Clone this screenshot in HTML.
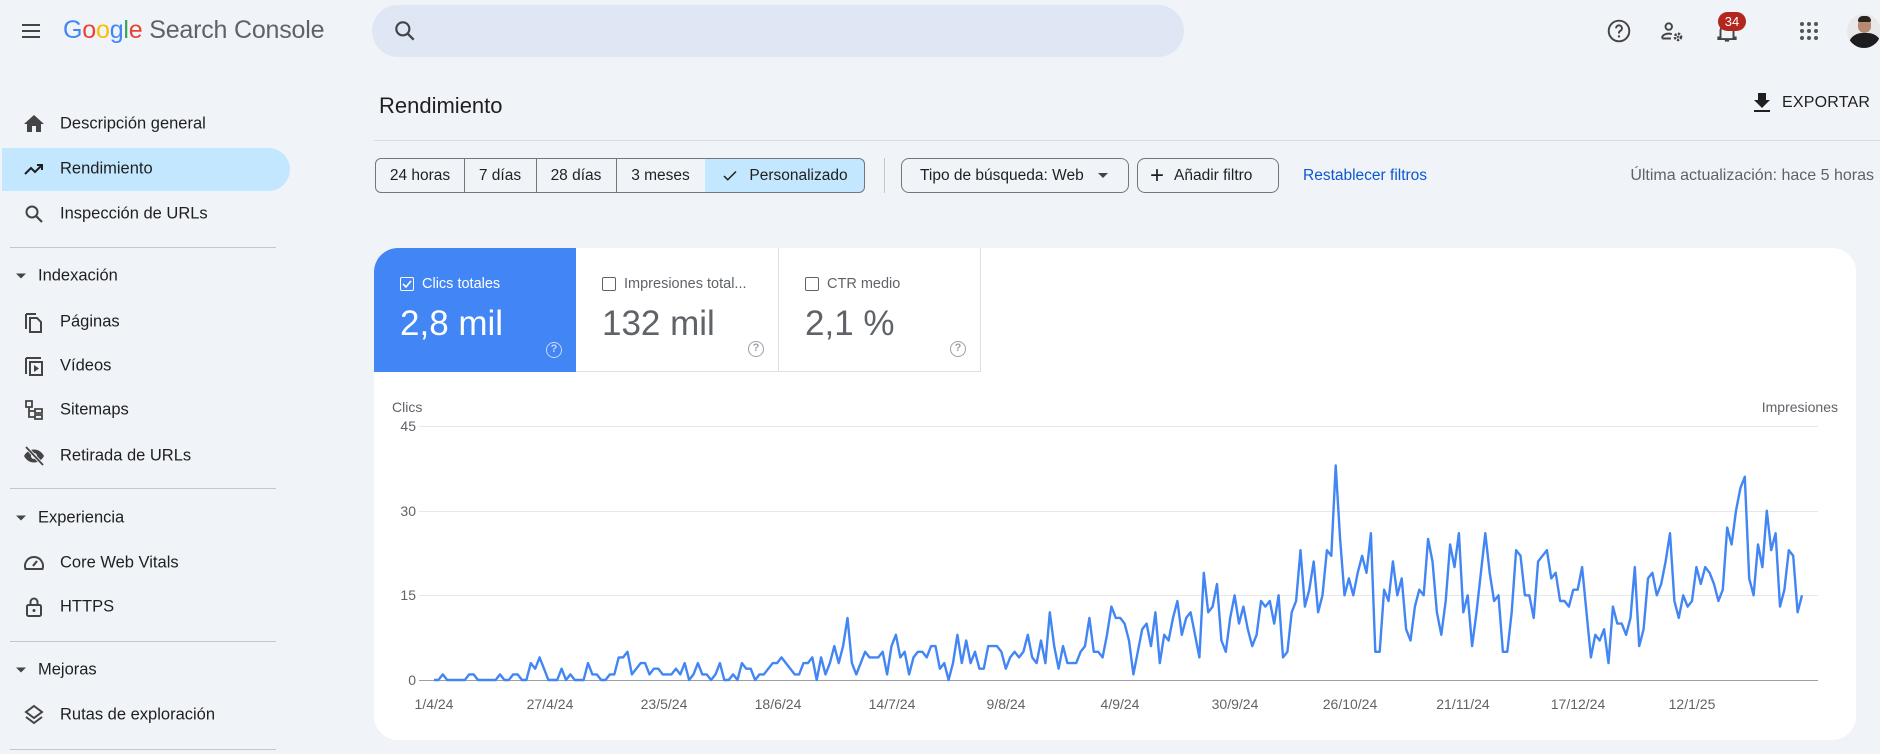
<!DOCTYPE html>
<html><head><meta charset="utf-8">
<style>
*{margin:0;padding:0;box-sizing:border-box}
body{width:1880px;height:754px;overflow:hidden;background:#f0f4f9;font-family:"Liberation Sans",Arial,sans-serif;color:#1f1f1f;position:relative}
.a{position:absolute}
.nav{position:absolute;left:60px;font-size:16.5px;color:#1f1f1f;transform:translateY(-50%)}
.ic{position:absolute;left:22px;width:24px;height:24px;transform:translateY(-50%)}
.sec{position:absolute;left:38px;font-size:16.5px;color:#1f1f1f;transform:translateY(-50%)}
.tri{position:absolute;left:16px;width:0;height:0;border-left:5px solid transparent;border-right:5px solid transparent;border-top:5px solid #444;transform:translateY(-50%)}
.div{position:absolute;left:10px;width:266px;height:1px;background:#c7c7c7}
.chip{position:absolute;top:158px;height:35px;border:1px solid #747775;font-size:15.5px;color:#1f1f1f;display:flex;align-items:center;justify-content:center}
.btn{position:absolute;top:158px;height:35px;border:1px solid #747775;border-radius:8px;font-size:15.5px;color:#1f1f1f;display:flex;align-items:center}
.tile{position:absolute;top:248px;height:124px;border-right:1px solid #e0e0e0;border-bottom:1px solid #e0e0e0}
.tl{position:absolute;left:26px;top:28px;font-size:14.5px;display:flex;align-items:center;gap:8px;white-space:nowrap}
.cb{width:14px;height:14px;border:1.6px solid #5f6368;border-radius:2px}
.tv{position:absolute;left:26px;top:56px;font-size:35px}
.q{position:absolute;right:14px;bottom:14px;width:16px;height:16px;border:1.5px solid #9aa0a6;border-radius:50%;font-size:11px;color:#9aa0a6;text-align:center;line-height:13px;font-weight:bold}
.yl{position:absolute;left:380px;width:36px;text-align:right;font-size:14px;color:#5f6368;transform:translateY(-50%)}
.gl{position:absolute;left:419px;width:1399px;height:1px;background:#e8e8e8}
.xl{position:absolute;top:696px;font-size:14px;color:#5f6368;transform:translateX(-50%);white-space:nowrap}
</style></head><body>

<!-- header -->
<svg class="a" style="left:19px;top:19px" width="24" height="24" viewBox="0 0 24 24"><path d="M3 6h18M3 12h18M3 18h18" stroke="#444" stroke-width="2"/></svg>
<div class="a" style="left:63px;top:16px;font-size:25px;white-space:nowrap;letter-spacing:-0.2px"><span style="color:#4285f4">G</span><span style="color:#ea4335">o</span><span style="color:#fbbc05">o</span><span style="color:#4285f4">g</span><span style="color:#34a853">l</span><span style="color:#ea4335">e</span><span style="color:#5f6368"> Search Console</span></div>
<div class="a" style="left:372px;top:5px;width:812px;height:52px;background:#dfe7f5;border-radius:26px"></div>
<svg class="a" style="left:392px;top:18px" width="26" height="26" viewBox="0 0 24 24"><circle cx="10" cy="10" r="6" fill="none" stroke="#444" stroke-width="2"/><path d="M14.5 14.5L20 20" stroke="#444" stroke-width="2.2"/></svg>

<svg class="a" style="left:1606px;top:18px" width="26" height="26" viewBox="0 0 24 24"><circle cx="12" cy="12" r="9.5" fill="none" stroke="#444" stroke-width="1.8"/><path d="M9.3 9.5a2.7 2.7 0 1 1 3.9 2.4c-.8.4-1.2 1-1.2 1.9v.5" fill="none" stroke="#444" stroke-width="1.8"/><circle cx="12" cy="17" r="1.1" fill="#444"/></svg>
<svg class="a" style="left:1659px;top:19px" width="26" height="26" viewBox="0 0 24 24"><circle cx="9" cy="7" r="3" fill="none" stroke="#444" stroke-width="1.8"/><path d="M3 18v-1c0-2 3-3.5 6-3.5 1 0 2 .2 2.8.5M3 18h8" fill="none" stroke="#444" stroke-width="1.8"/><circle cx="17.5" cy="16.5" r="2.8" fill="none" stroke="#444" stroke-width="2.4" stroke-dasharray="2 1.2"/><circle cx="17.5" cy="16.5" r="1" fill="#444"/></svg>
<svg class="a" style="left:1714px;top:19px" width="26" height="26" viewBox="0 0 24 24"><path d="M6 17V11a6 6 0 0 1 12 0v6h2v1.5H4V17zM10 20h4" fill="none" stroke="#444" stroke-width="1.8"/></svg>
<div class="a" style="left:1718px;top:12px;width:28px;height:19px;border-radius:10px;background:#b3261e;color:#fff;font-size:13px;text-align:center;line-height:19px">34</div>
<svg class="a" style="left:1798px;top:20px" width="22" height="22" viewBox="0 0 22 22" fill="#555"><circle cx="4" cy="4" r="2"/><circle cx="11" cy="4" r="2"/><circle cx="18" cy="4" r="2"/><circle cx="4" cy="11" r="2"/><circle cx="11" cy="11" r="2"/><circle cx="18" cy="11" r="2"/><circle cx="4" cy="18" r="2"/><circle cx="11" cy="18" r="2"/><circle cx="18" cy="18" r="2"/></svg>
<div class="a" style="left:1847px;top:14px;width:34px;height:34px;border-radius:50%;overflow:hidden;background:#e8e8e8">
<div class="a" style="left:11px;top:4px;width:13px;height:15px;border-radius:7px;background:#b58a70"></div>
<div class="a" style="left:11px;top:2px;width:13px;height:6px;border-radius:7px 7px 2px 2px;background:#2a2420"></div>
<div class="a" style="left:1px;top:19px;width:34px;height:20px;border-radius:14px 14px 0 0;background:#1d1d1f"></div>
</div>

<!-- sidebar -->
<svg class="ic" style="top:124px" viewBox="0 0 24 24"><path d="M10 20v-6h4v6h5v-8h3L12 3 2 12h3v8z" fill="#444"/></svg>
<div class="nav" style="top:124px">Descripción general</div>
<div class="a" style="left:2px;top:148px;width:288px;height:43px;background:#c2e7ff;border-radius:0 22px 22px 0"></div>
<svg class="ic" style="top:169px" viewBox="0 0 24 24"><path d="M3 17l6-6 4 4 7-7M15 8h5v5" fill="none" stroke="#1f1f1f" stroke-width="2"/></svg>
<div class="nav" style="top:169px">Rendimiento</div>
<svg class="ic" style="top:214px" viewBox="0 0 24 24"><circle cx="10" cy="10" r="5.5" fill="none" stroke="#444" stroke-width="2"/><path d="M14 14l6 6" stroke="#444" stroke-width="2.2"/></svg>
<div class="nav" style="top:214px">Inspección de URLs</div>
<div class="div" style="top:247px"></div>
<div class="tri" style="top:276px"></div><div class="sec" style="top:276px">Indexación</div>
<svg class="ic" style="top:322px" viewBox="0 0 24 24"><path d="M4 4v15M4 4h10M8 8h7l4 4v10H8z" fill="none" stroke="#444" stroke-width="2"/></svg>
<div class="nav" style="top:322px">Páginas</div>
<svg class="ic" style="top:366px" viewBox="0 0 24 24"><path d="M4 4v16M4 4h15M8 8h12v13H8z" fill="none" stroke="#444" stroke-width="2"/><path d="M12 11v7l5-3.5z" fill="#444"/></svg>
<div class="nav" style="top:366px">Vídeos</div>
<svg class="ic" style="top:410px" viewBox="0 0 24 24"><path d="M4 3h6v6H4zM13 11h7v4h-7zM13 17h7v4h-7zM7 9v10h6M7 13h6" fill="none" stroke="#444" stroke-width="1.8"/></svg>
<div class="nav" style="top:410px">Sitemaps</div>
<svg class="ic" style="top:456px" viewBox="0 0 24 24"><path d="M2 12c2.5-4.5 6-6.5 10-6.5s7.5 2 10 6.5c-2.5 4.5-6 6.5-10 6.5S4.5 16.5 2 12z" fill="#444"/><circle cx="12" cy="12" r="3" fill="#f0f4f9"/><path d="M4 3l17 18" stroke="#f0f4f9" stroke-width="3.5"/><path d="M4 3l17 18" stroke="#444" stroke-width="1.8"/></svg>
<div class="nav" style="top:456px">Retirada de URLs</div>
<div class="div" style="top:488px"></div>
<div class="tri" style="top:518px"></div><div class="sec" style="top:518px">Experiencia</div>
<svg class="ic" style="top:563px" viewBox="0 0 24 24"><path d="M3.5 18a9 9 0 1 1 17 0z" fill="none" stroke="#444" stroke-width="2"/><path d="M11 15l4-5" stroke="#444" stroke-width="2.2"/></svg>
<div class="nav" style="top:563px">Core Web Vitals</div>
<svg class="ic" style="top:607px" viewBox="0 0 24 24"><rect x="5" y="10" width="14" height="11" rx="1.5" fill="none" stroke="#444" stroke-width="2"/><path d="M8.5 10V7a3.5 3.5 0 0 1 7 0v3" fill="none" stroke="#444" stroke-width="2"/><circle cx="12" cy="15.5" r="1.5" fill="#444"/></svg>
<div class="nav" style="top:607px">HTTPS</div>
<div class="div" style="top:641px"></div>
<div class="tri" style="top:670px"></div><div class="sec" style="top:670px">Mejoras</div>
<svg class="ic" style="top:715px" viewBox="0 0 24 24"><path d="M12 3l8 6-8 6-8-6z" fill="none" stroke="#444" stroke-width="2"/><path d="M4 14l8 6 8-6" fill="none" stroke="#444" stroke-width="2"/></svg>
<div class="nav" style="top:715px">Rutas de exploración</div>
<div class="div" style="top:749px"></div>

<!-- main header -->
<div class="a" style="left:379px;top:93px;font-size:22px;color:#1f1f1f">Rendimiento</div>
<svg class="a" style="left:1750px;top:90px" width="24" height="24" viewBox="0 0 24 24"><path d="M8 3h8v7h4l-8 8-8-8h4zM4 20h16v2H4z" fill="#1f1f1f"/></svg>
<div class="a" style="left:1782px;top:94px;font-size:16px;color:#1f1f1f;letter-spacing:0.2px">EXPORTAR</div>
<div class="a" style="left:374px;top:140px;width:1506px;height:1px;background:#dadce0"></div>

<!-- chips -->
<div class="chip" style="left:375px;width:90px;border-radius:6px 0 0 6px">24 horas</div>
<div class="chip" style="left:464px;width:73px;border-left:none">7 días</div>
<div class="chip" style="left:536px;width:81px;border-left:none">28 días</div>
<div class="chip" style="left:616px;width:90px;border-left:none">3 meses</div>
<div class="chip" style="left:705px;width:160px;border-left:none;border-radius:0 6px 6px 0;background:#c2e7ff"><svg width="18" height="18" viewBox="0 0 24 24" style="margin-right:10px"><path d="M4 12l5 5L20 6" fill="none" stroke="#1f1f1f" stroke-width="2"/></svg>Personalizado</div>
<div class="a" style="left:884px;top:158px;width:1px;height:35px;background:#c7c7c7"></div>
<div class="btn" style="left:901px;width:228px;padding-left:18px">Tipo de búsqueda: Web<span style="margin-left:14px;border-left:5px solid transparent;border-right:5px solid transparent;border-top:5px solid #444"></span></div>
<div class="btn" style="left:1137px;width:142px;padding-left:12px"><span style="font-size:24px;margin-right:10px;font-weight:300;line-height:20px">+</span>Añadir filtro</div>
<div class="a" style="left:1303px;top:167px;font-size:15.5px;color:#0b57d0">Restablecer filtros</div>
<div class="a" style="right:6px;top:167px;font-size:16px;color:#5f6368">Última actualización: hace 5 horas</div>

<!-- card -->
<div class="a" style="left:374px;top:248px;width:1482px;height:492px;background:#fff;border-radius:24px"></div>
<div class="tile" style="left:374px;width:202px;background:#4285f4;border-radius:24px 0 0 0;border:none;color:#fff">
<div class="tl"><div class="cb" style="border-color:#fff;position:relative"><svg width="12" height="12" viewBox="0 0 12 12" style="position:absolute;left:0;top:0"><path d="M2 6l3 3 5-6" fill="none" stroke="#fff" stroke-width="1.6"/></svg></div>Clics totales</div>
<div class="tv">2,8 mil</div>
<div class="q" style="border-color:#c6dafc;color:#c6dafc">?</div>
</div>
<div class="tile" style="left:576px;width:203px;color:#5f6368">
<div class="tl"><div class="cb"></div>Impresiones total...</div>
<div class="tv">132 mil</div><div class="q">?</div>
</div>
<div class="tile" style="left:779px;width:202px;color:#5f6368">
<div class="tl"><div class="cb"></div>CTR medio</div>
<div class="tv">2,1 %</div><div class="q">?</div>
</div>

<!-- chart -->
<div class="a" style="left:392px;top:399px;font-size:14px;color:#5f6368">Clics</div>
<div class="a" style="right:42px;top:399px;font-size:14px;color:#5f6368">Impresiones</div>
<div class="gl" style="top:426px"></div><div class="gl" style="top:511px"></div><div class="gl" style="top:595px"></div>
<div class="gl" style="top:680px;background:#9aa0a6"></div>
<div class="yl" style="top:426px">45</div><div class="yl" style="top:511px">30</div><div class="yl" style="top:595px">15</div><div class="yl" style="top:680px">0</div>
<div class="xl" style="left:434px">1/4/24</div>
<div class="xl" style="left:550px">27/4/24</div>
<div class="xl" style="left:664px">23/5/24</div>
<div class="xl" style="left:778px">18/6/24</div>
<div class="xl" style="left:892px">14/7/24</div>
<div class="xl" style="left:1006px">9/8/24</div>
<div class="xl" style="left:1120px">4/9/24</div>
<div class="xl" style="left:1235px">30/9/24</div>
<div class="xl" style="left:1350px">26/10/24</div>
<div class="xl" style="left:1463px">21/11/24</div>
<div class="xl" style="left:1578px">17/12/24</div>
<div class="xl" style="left:1692px">12/1/25</div>
<svg class="a" style="left:0;top:0" width="1880" height="754"><polyline id="ln" fill="none" stroke="#4285f4" stroke-width="2.4" stroke-linejoin="round" points=""/></svg>
<script>
var d=[0,0,1,0,0,0,0,0,1,1,0,0,0,0,0,1,0,0,1,1,0,0,3,2,4,2,0,0,0,2,0,1,0,0,0,3,1,1,0,0,1,1,4,4,5,1,2,3,3,1,2,2,1,1,1,2,1,3,0,1,3,1,1,0,1,3,0,0,1,0,3,2,2,0,1,1,2,3,3,4,3,2,1,1,3,3,4,0,4,1,3,6,3,6,11,3,1,3,5,4,4,4,5,1,6,8,4,5,1,4,5,5,4,6,6,2,3,0,3,8,3,7,3,5,2,2,6,6,6,5,2,4,5,4,5,8,4,3,7,3,12,6,2,6,3,3,3,5,6,11,5,5,4,8,13,11,
11,10,7,1,5,9,10,6,12,3,8,7,11,14,8,11,12,8,4,19,12,13,17,7,5,11,15,10,13,9,6,8,14,13,14,10,15,4,5,12,14,23,13,16,21,12,15,23,22,38,25,15,18,15,19,22,19,26,5,5,16,14,21,15,18,9,7,13,16,15,25,21,12,8,14,24,20,26,12,15,6,12,19,26,19,14,15,5,5,12,23,22,15,15,11,21,22,23,18,19,14,14,13,16,16,20,12,4,8,7,9,3,13,10,10,8,11,20,6,9,18,19,15,17,21,26,14,11,15,13,14,20,17,20,19,17,14,16,27,24,30,34,36,18,15,24,20,30,23,26,13,16,23,22,12,15];
var n=d.length,s=(1802-434)/(n-1),p=[];
for(var i=0;i<n;i++)p.push((434+i*s).toFixed(1)+","+(680-d[i]*254/45).toFixed(1));
document.getElementById("ln").setAttribute("points",p.join(" "));
</script>
</body></html>
